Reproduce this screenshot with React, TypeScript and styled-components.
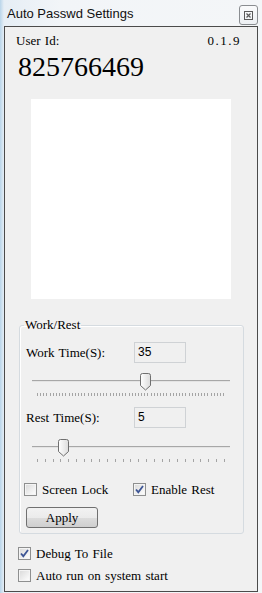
import React from 'react'
import styled, { createGlobalStyle } from 'styled-components'

const GlobalStyle = createGlobalStyle`
  html, body {
    margin: 0;
    padding: 0;
    width: 262px;
    height: 593px;
    overflow: hidden;
  }
  body {
    font-family: "Liberation Serif", serif;
  }
`

// the dialog's own font is a thin serif with wide spaces
const LABEL_FONT = `
  font-family: "Liberation Serif", "Times New Roman", serif;
  font-size: 13px;
  line-height: 14px;
  word-spacing: 1px;
  color: #000;
`

const StyledWindow = styled.div`
  width: 262px;
  height: 593px;
  box-sizing: border-box;
  display: flex;
  flex-direction: column;
  padding: 0 4px 1px 4px;
  background: linear-gradient(to right, #b9d5ea 0, #e6eef5 4px, #f2f5f8 60px, #f4f6f8 100%);
`

const StyledTitleBar = styled.div`
  height: 26px;
  display: flex;
  justify-content: space-between;
  align-items: flex-start;
  flex-shrink: 0;
`

const StyledTitle = styled.span`
  font-family: "Liberation Sans", Arial, sans-serif;
  font-size: 13px;
  line-height: 16px;
  color: #111;
  margin: 6px 0 0 3px;
`

const StyledCloseButton = styled.button`
  width: 19px;
  height: 20px;
  margin-top: 5px;
  padding: 0;
  border: 1px solid #8a8d91;
  border-radius: 3px;
  background: linear-gradient(#fafbfc, #eef1f4);
  display: flex;
  align-items: center;
  justify-content: center;
`

const StyledClient = styled.div`
  flex: 1;
  border: 1px solid #4b4b4b;
  background: #f0f0f0;
  display: flex;
  flex-direction: column;
`

const StyledHeaderRow = styled.div`
  display: flex;
  justify-content: space-between;
  margin: 7px 16px 0 11px;
  ${LABEL_FONT}
`

const StyledVersion = styled.span`
  letter-spacing: 1.5px;
`

const StyledUserId = styled.div`
  font-family: "Liberation Serif", "Times New Roman", serif;
  font-size: 28px;
  line-height: 32px;
  color: #000;
  margin: 3px 0 0 13px;
`

const StyledCodeBox = styled.div`
  width: 200px;
  height: 200px;
  margin: 16px 0 0 26px;
  background: #fff;
`

const StyledGroup = styled.fieldset`
  margin: 19px 0 0 14px;
  width: 225px;
  box-sizing: border-box;
  padding: 10px 0 5px 0;
  border: 1px solid #d5dbe0;
  border-radius: 3px;
  box-shadow: inset 1px 1px 0 #fff;
  display: flex;
  flex-direction: column;
  min-width: 0;
`

const StyledLegend = styled.legend`
  ${LABEL_FONT}
  padding: 0 1px;
  margin-left: 4px;
`

const StyledFieldRow = styled.div<{ $mt?: number }>`
  display: flex;
  align-items: center;
  height: 21px;
  padding-left: 6px;
  margin-top: ${(p) => p.$mt ?? 0}px;
`

const StyledLabel = styled.span<{ $width?: number }>`
  ${LABEL_FONT}
  white-space: nowrap;
  ${(p) => (p.$width ? `width: ${p.$width}px;` : '')}
`

const StyledInput = styled.div`
  width: 52px;
  height: 21px;
  box-sizing: border-box;
  border: 1px solid #cfd2d5;
  background: #f0f0f0;
  font-family: "Liberation Sans", Arial, sans-serif;
  font-size: 12px;
  line-height: 19px;
  padding-left: 3px;
  color: #000;
`

const StyledSlider = styled.div<{ $mt: number }>`
  position: relative;
  height: 24px;
  margin: ${(p) => p.$mt}px 0 0 12px;
  width: 198px;
`

const StyledTrack = styled.div`
  position: absolute;
  left: 0;
  right: 0;
  top: 7px;
  height: 1px;
  background: #a7a7a7;
  border-bottom: 1px solid #e4e4e4;
`

const StyledTicks = styled.div`
  position: absolute;
  left: 5px;
  right: 5px;
  top: 20px;
  height: 3px;
  display: flex;
  justify-content: space-between;
`

const StyledTick = styled.span`
  width: 1px;
  height: 3px;
  background: #a4a4a4;
`

const StyledThumb = styled.svg`
  position: absolute;
  top: 0;
  margin-left: -5px;
`

const StyledCheckRow = styled.div<{ $ml: number; $mt: number }>`
  display: flex;
  align-items: center;
  margin: ${(p) => p.$mt}px 0 0 ${(p) => p.$ml}px;
  height: 13px;
`

const StyledCheckItem = styled.label<{ $width?: number }>`
  display: flex;
  align-items: center;
  gap: 5px;
  ${(p) => (p.$width ? `width: ${p.$width}px;` : '')}
`

const StyledBox = styled.span`
  width: 13px;
  height: 13px;
  box-sizing: border-box;
  border: 1px solid #8e8f8f;
  background: linear-gradient(135deg, #d8d8d8, #f4f4f4 70%, #ffffff);
  box-shadow: inset 0 0 0 1px #f4f4f4;
  display: flex;
  align-items: center;
  justify-content: center;
  flex-shrink: 0;
`

const StyledApply = styled.button`
  width: 72px;
  height: 21px;
  margin: 11px 0 0 6px;
  padding: 0;
  border: 1px solid #707070;
  border-radius: 3px;
  background: linear-gradient(#f2f2f2 0%, #ebebeb 50%, #dddddd 51%, #cfcfcf 100%);
  ${LABEL_FONT}
`

const CloseIcon = () => (
  <svg width="9" height="9" viewBox="0 0 9 9">
    <rect x="0.5" y="0.5" width="8" height="8" fill="none" stroke="#5a5a5a" />
    <path d="M2.5 2.5 L6.5 6.5 M6.5 2.5 L2.5 6.5" stroke="#5a5a5a" strokeWidth="1.2" />
  </svg>
)

const Check = () => (
  <svg width="9" height="9" viewBox="0 0 9 9">
    <path d="M1 4.5 L3.3 7.2 L8 1" fill="none" stroke="#3d5595" strokeWidth="1.8" />
  </svg>
)

type SliderProps = { min: number; max: number; value: number; mt: number }

const Slider = ({ min, max, value, mt }: SliderProps) => {
  const count = max - min + 1
  const left = 5 + ((value - min) / (max - min)) * 188
  return (
    <StyledSlider $mt={mt}>
      <StyledTrack />
      <StyledTicks>
        {Array.from({ length: count }, (_, i) => (
          <StyledTick key={i} />
        ))}
      </StyledTicks>
      <StyledThumb width="11" height="18" viewBox="0 0 11 18" style={{ left }}>
        <defs>
          <linearGradient id="thumbFill" x1="0" y1="0" x2="1" y2="0">
            <stop offset="0" stopColor="#ffffff" />
            <stop offset="1" stopColor="#dcdcdc" />
          </linearGradient>
        </defs>
        <path
          d="M0.5 2.5 Q0.5 0.5 2.5 0.5 L8.5 0.5 Q10.5 0.5 10.5 2.5 L10.5 12.5 L5.5 17 L0.5 12.5 Z"
          fill="url(#thumbFill)"
          stroke="#6f6f6f"
        />
      </StyledThumb>
    </StyledSlider>
  )
}

type CheckProps = { label: string; checked?: boolean; width?: number }

const CheckItem = ({ label, checked, width }: CheckProps) => (
  <StyledCheckItem $width={width}>
    <StyledBox>{checked && <Check />}</StyledBox>
    <StyledLabel>{label}</StyledLabel>
  </StyledCheckItem>
)

export default function App() {
  return (
    <>
      <GlobalStyle />
      <StyledWindow>
        <StyledTitleBar>
          <StyledTitle>Auto Passwd Settings</StyledTitle>
          <StyledCloseButton>
            <CloseIcon />
          </StyledCloseButton>
        </StyledTitleBar>
        <StyledClient>
          <StyledHeaderRow>
            <span>User Id:</span>
            <StyledVersion>0.1.9</StyledVersion>
          </StyledHeaderRow>
          <StyledUserId>825766469</StyledUserId>
          <StyledCodeBox />
          <StyledGroup>
            <StyledLegend>Work/Rest</StyledLegend>
            <StyledFieldRow>
              <StyledLabel $width={108}>Work Time(S):</StyledLabel>
              <StyledInput>35</StyledInput>
            </StyledFieldRow>
            <Slider min={1} max={60} value={35} mt={10} />
            <StyledFieldRow $mt={10}>
              <StyledLabel $width={108}>Rest Time(S):</StyledLabel>
              <StyledInput>5</StyledInput>
            </StyledFieldRow>
            <Slider min={1} max={25} value={4.3} mt={11} />
            <StyledCheckRow $ml={4} $mt={20}>
              <CheckItem label="Screen Lock" width={109} />
              <CheckItem label="Enable Rest" checked />
            </StyledCheckRow>
            <StyledApply>Apply</StyledApply>
          </StyledGroup>
          <StyledCheckRow $ml={13} $mt={13}>
            <CheckItem label="Debug To File" checked />
          </StyledCheckRow>
          <StyledCheckRow $ml={13} $mt={9}>
            <CheckItem label="Auto run on system start" />
          </StyledCheckRow>
        </StyledClient>
      </StyledWindow>
    </>
  )
}
